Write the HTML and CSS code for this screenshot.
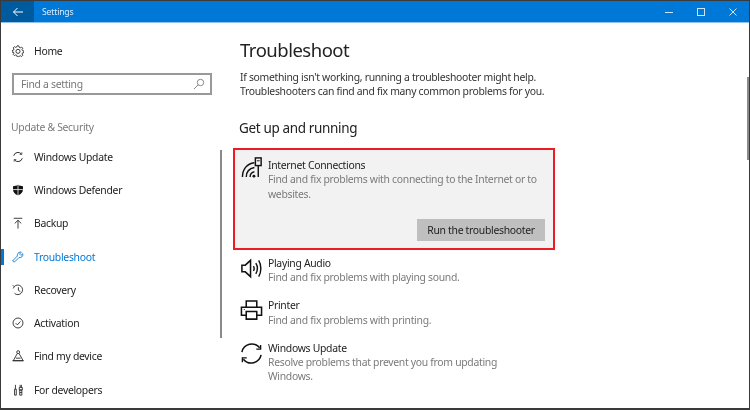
FILE: index.html
```html
<!DOCTYPE html>
<html lang="en">
<head>
<meta charset="utf-8">
<title>Settings</title>
<link rel="stylesheet" href="styles.css">
</head>
<body>
<div class="window">
  <header class="titlebar">
    <div class="back"><svg width="12" height="12" viewBox="0 0 12 12"><path d="M11 6H1.500M5.500 2 1.500 6l4 4" fill="none" stroke="#fff" stroke-width="1"/></svg></div>
    <span class="app-title">Settings</span>
    <div class="controls">
      <svg width="10" height="10" viewBox="0 0 10 10"><path d="M1 5.500h8" stroke="#cfe4f7" stroke-width="1"/></svg>
      <svg width="10" height="10" viewBox="0 0 10 10"><rect x="1.500" y="1.500" width="7" height="7" fill="none" stroke="#cfe4f7"/></svg>
      <svg width="10" height="10" viewBox="0 0 10 10"><path d="M1.500 1.500l7 7M8.500 1.500l-7 7" stroke="#cfe4f7"/></svg>
    </div>
  </header>
  <div class="content">
    <aside class="sidebar">
      <div class="home">
        <svg class="nav-icon" viewBox="0 0 14 14"><path d="M6 1h2l.4 1.700 1.300.6 1.500-.9 1.400 1.400-.9 1.500.6 1.300 1.700.4v1.800l-1.700.4-.6 1.300.9 1.500-1.400 1.400-1.500-.9-1.300.6L8 13.800H6l-.4-1.700-1.300-.6-1.500.9-1.400-1.400.9-1.500-.6-1.300L0 8.300V6.500l1.700-.4.6-1.300-.9-1.500 1.400-1.400 1.500.9 1.300-.6z" fill="none" stroke="#222"/><circle cx="7" cy="7.400" r="2.400" fill="none" stroke="#222"/></svg>
        <span>Home</span>
      </div>
      <div class="search">
        <span>Find a setting</span>
        <svg width="12" height="12" viewBox="0 0 12 12"><circle cx="7.500" cy="4.500" r="3.200" fill="none" stroke="#888"/><path d="M5.200 6.800 1 11" stroke="#888"/></svg>
      </div>
      <div class="group">Update &amp; Security</div>
      <nav class="nav">
        <div class="nav-item">
          <svg class="nav-icon" viewBox="0 0 14 14"><path d="M2 5.500A5.200 5.200 0 0 1 11 3.500M12 8.500A5.200 5.200 0 0 1 3 10.500" fill="none" stroke="#222" stroke-width="1.100"/><path d="M11.500 1.500v2.500H9M2.500 12.500V10H5" fill="none" stroke="#222" stroke-width=".8"/></svg>
          <span>Windows Update</span>
        </div>
        <div class="nav-item">
          <svg class="nav-icon" viewBox="0 0 14 14"><path d="M7 .8c1.800 1.200 3.600 1.700 5.800 1.700v4.200c0 3-2.400 5.300-5.800 6.500C3.600 12 1.200 9.700 1.200 6.700V2.500C3.400 2.500 5.200 2 7 .8z" fill="#111"/><path d="M7 1v12M1.200 6.500h11.600" stroke="#fff" stroke-width=".9"/></svg>
          <span>Windows Defender</span>
        </div>
        <div class="nav-item">
          <svg class="nav-icon" viewBox="0 0 14 14"><path d="M2 1.500h10M7 13.500V4M3.200 7.500 7 3.800l3.800 3.700" fill="none" stroke="#222"/></svg>
          <span>Backup</span>
        </div>
        <div class="nav-item active">
          <svg class="nav-icon" viewBox="0 0 14 14"><path d="M1.200 11 6.300 5.800C5.700 3.600 7.200 1.200 10 1.200l.9.200L8.800 3.600l1.600 1.600 2.200-2.100c.6 3-1.500 5-4.500 4.600l-5 5c-1 .7-2.700-.8-1.900-1.900z" fill="none" stroke="#0078d7" stroke-width="1"/></svg>
          <span>Troubleshoot</span>
        </div>
        <div class="nav-item">
          <svg class="nav-icon" viewBox="0 0 14 14"><path d="M2.700 2.900A5.600 5.600 0 1 1 3 11" fill="none" stroke="#222"/><path d="M1 1.500 3 3.500 1 5M7.500 3.800v3.600l2.300 1.600" fill="none" stroke="#222"/></svg>
          <span>Recovery</span>
        </div>
        <div class="nav-item">
          <svg class="nav-icon" viewBox="0 0 14 14"><circle cx="7" cy="7" r="5.800" fill="none" stroke="#222"/><path d="M4.300 7.200 6.300 9.200 9.800 5.200" fill="none" stroke="#222"/></svg>
          <span>Activation</span>
        </div>
        <div class="nav-item">
          <svg class="nav-icon" viewBox="0 0 14 14"><circle cx="7.200" cy="2.500" r="1.700" fill="none" stroke="#222"/><path d="M6.200 4 1.500 12.500h11.500L8.200 4M.5 12.500h13M4.500 9.500h5.500" fill="none" stroke="#222"/></svg>
          <span>Find my device</span>
        </div>
        <div class="nav-item">
          <svg class="nav-icon" viewBox="0 0 14 14"><path d="M4 1v5M3 6h2v7H3zM9.500 1v3M11 1v3M8.500 4h3.500v3h-3.500zM9 7h2.500v6H9zM9 10h2.500" fill="none" stroke="#222"/></svg>
          <span>For developers</span>
        </div>
      </nav>
      <div class="side-scroll"></div>
    </aside>
    <main class="main">
      <h1 class="page-title">Troubleshoot</h1>
      <p class="intro">If something isn't working, running a troubleshooter might help.<br>Troubleshooters can find and fix many common problems for you.</p>
      <h2 class="section">Get up and running</h2>
      <section class="card selected">
        <div class="item">
          <svg class="item-icon" viewBox="0 0 24 24"><path d="M1.500 22C1.500 14 6 8 14 7M5.500 22c0-5 3-9 8.500-10M9.500 22c0-3 1.500-5 4.500-5.500" fill="none" stroke="#111" stroke-width="1.500"/><circle cx="13.500" cy="21" r="1.500" fill="#111"/><rect x="15" y="2" width="6" height="8" fill="none" stroke="#111" stroke-width="1.500"/><path d="M16.500 5h3" stroke="#111"/><path d="M18 10V22" stroke="#111" stroke-width="1.500"/></svg>
          <div class="item-text">
            <div class="item-name">Internet Connections</div>
            <div class="item-desc">Find and fix problems with connecting to the Internet or to websites.</div>
          </div>
        </div>
        <div class="actions"><button class="run">Run the troubleshooter</button></div>
      </section>
      <div class="item plain">
        <svg class="item-icon" viewBox="0 0 24 24"><path d="M2 8.500h3.500L11 3.500v17L5.500 15.500H2z" fill="none" stroke="#111" stroke-width="1.600"/><path d="M14 9.500c1 1.600 1 3.500 0 5M16.500 6.500c2 3.200 2 7.800 0 11M19.500 3.500c3 4.800 3 12.200 0 17" fill="none" stroke="#111" stroke-width="1.500"/></svg>
        <div class="item-text">
          <div class="item-name">Playing Audio</div>
          <div class="item-desc">Find and fix problems with playing sound.</div>
        </div>
      </div>
      <div class="item plain">
        <svg class="item-icon" viewBox="0 0 24 24"><path d="M6.500 8V2h11v6M6 17H1.500V8.500h21V17H18M6.500 13h11v8h-11z" fill="none" stroke="#111" stroke-width="1.600"/><path d="M4 11h1" stroke="#111"/></svg>
        <div class="item-text">
          <div class="item-name">Printer</div>
          <div class="item-desc">Find and fix problems with printing.</div>
        </div>
      </div>
      <div class="item plain">
        <svg class="item-icon" viewBox="0 0 24 24"><path d="M2 10.500A10.500 10.500 0 0 1 20.500 6M22 13.500A10.500 10.500 0 0 1 3.500 18" fill="none" stroke="#111" stroke-width="1.600"/><path d="M21.500 3v4.500H17M2.500 21v-4.500H7" fill="none" stroke="#111" stroke-width="1.400"/></svg>
        <div class="item-text">
          <div class="item-name">Windows Update</div>
          <div class="item-desc">Resolve problems that prevent you from updating Windows.</div>
        </div>
      </div>
      <div class="main-scroll"></div>
    </main>
  </div>
</div>
</body>
</html>
```
FILE: styles.css
```css
* { box-sizing: border-box; }
html, body { margin: 0; padding: 0; }
body {
  width: 750px;
  height: 410px;
  background: #3a3a3a;
  font-family: "Noto Sans", "Open Sans", sans-serif;
  font-size: 10.400px;
  letter-spacing: -0.300px;
  color: #222;
  overflow: hidden;
}
.window {
  margin: 1px 1px 0 1px;
  height: 407px;
  background: #fff;
  display: flex;
  flex-direction: column;
  filter: blur(0.35px);
}
.titlebar {
  height: 22px;
  background: #0078d7;
  color: #d9ebfa;
  display: flex;
  align-items: center;
  border-bottom: 1px solid #8cc2ee;
  flex: none;
}
.back {
  width: 33px;
  height: 100%;
  background: #005a9e;
  display: flex;
  align-items: center;
  justify-content: center;
}
.app-title { margin-left: 8px; font-size: 8.700px; letter-spacing: -0.200px; }
.controls {
  margin-left: auto;
  display: flex;
  gap: 22px;
  padding-right: 11px;
}
.content { flex: 1; display: flex; position: relative; min-height: 0; }
.sidebar { width: 232px; flex: none; position: relative; padding-top: 20px; }
.home {
  display: flex;
  align-items: center;
  height: 16px;
  padding-left: 11px;
  gap: 10px;
}
.nav-icon { width: 12px; height: 12px; flex: none; }
.search {
  margin: 14px 0 0 11px;
  width: 200px;
  height: 22px;
  border: 2px solid #999;
  padding: 0 5px 0 7px;
  display: flex;
  align-items: center;
  justify-content: space-between;
  color: #777;
}
.group { margin: 24px 0 0 10px; color: #7a7a7a; height: 16px; line-height: 16px; }
.nav { margin-top: 5px; }
.nav-item {
  height: 33.300px;
  display: flex;
  align-items: center;
  gap: 10px;
  padding-left: 11px;
  position: relative;
}
.nav-item.active { color: #0078d7; }
.nav-item.active::before {
  content: "";
  position: absolute;
  left: 0;
  top: 9px;
  width: 3px;
  height: 16px;
  background: #0078d7;
}
.side-scroll {
  position: absolute;
  left: 219px;
  top: 127px;
  width: 2px;
  height: 188px;
  background: #8a8a8a;
}
.main { flex: 1; position: relative; padding-top: 13px; min-width: 0; }
.page-title {
  margin: 0 0 0 7px;
  font-size: 18.500px;
  letter-spacing: -0.500px;
  font-weight: 400;
  line-height: 28px;
  color: #222;
}
.intro { margin: 6px 0 0 7px; line-height: 14.400px; color: #333; }
.section {
  margin: 19px 0 0 6px;
  font-size: 13.500px;
  letter-spacing: -0.350px;
  font-weight: 400;
  line-height: 20px;
  color: #222;
}
.card { margin-top: 10px; width: 322px; height: 102px; }
.selected {
  background: #f2f2f2;
  border: 2px solid #ed1c24;
  padding: 8px 8px 0 6px;
}
.item { display: flex; gap: 4px; }
.selected .item-text { padding-left: 0; }
.selected .item-icon { margin-top: -2px; }
.plain { margin: 0 0 0 7px; width: 285px; min-height: 42.400px; }
.card + .plain { margin-top: 6px; }
.item-icon { width: 23px; height: 23px; flex: none; margin-top: 1px; }
.item-text { flex: 1; padding-left: 1px; }
.item-name { line-height: 14.400px; color: #222; }
.item-desc { line-height: 14.400px; color: #7a7a7a; }
.actions { display: flex; justify-content: flex-end; margin-top: 18px; }
.run {
  width: 128px;
  height: 22px;
  border: 0;
  background: #bfbfbf;
  color: #222;
  font: inherit;
  letter-spacing: inherit;
  padding: 0;
}
.main-scroll {
  position: absolute;
  right: 0;
  top: 54px;
  width: 2px;
  height: 83px;
  background: #8a8a8a;
}
```
